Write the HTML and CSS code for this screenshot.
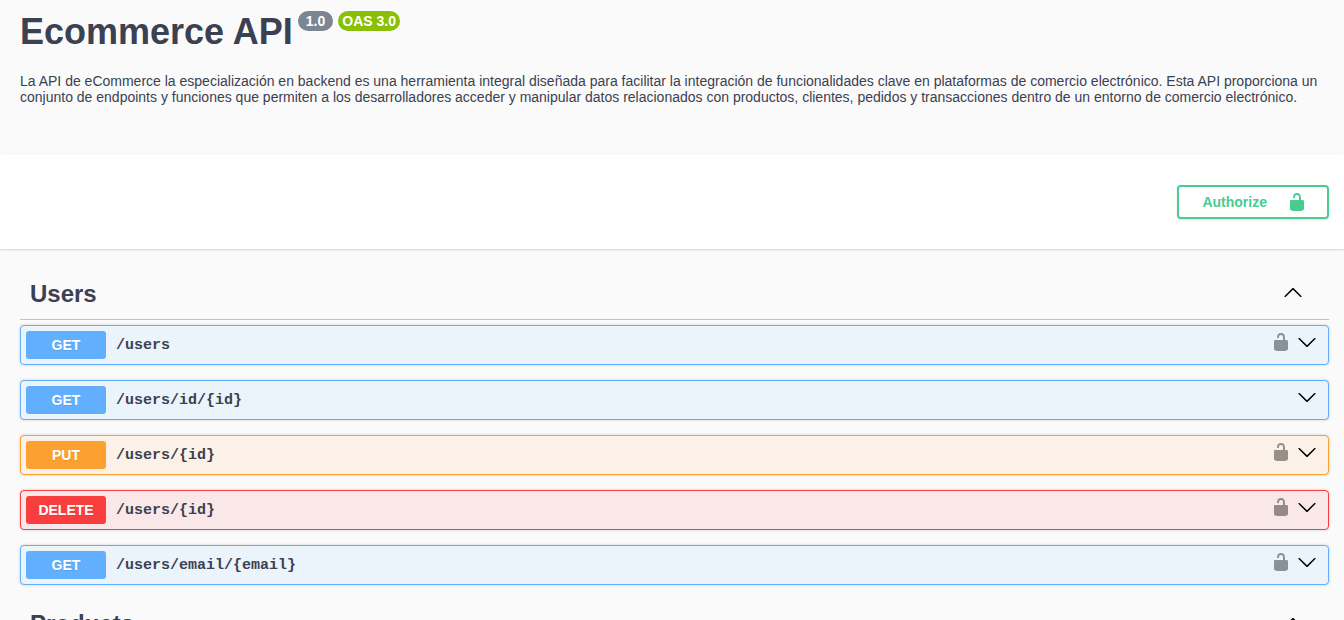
FILE: index.html
```html
<!DOCTYPE html>
<html lang="es">
<head>
  <meta charset="UTF-8">
  <title>Ecommerce API</title>
  <link rel="stylesheet" href="styles.css">
</head>
<body>

  <svg class="sprite" aria-hidden="true">
    <symbol id="unlocked" viewBox="0 0 20 20">
      <path d="M15.8 8H14V5.6C14 2.703 12.665 1 10 1 7.334 1 6 2.703 6 5.6V6h2v-.801C8 3.754 8.797 3 10 3c1.203 0 2 .754 2 2.199V8H4c-.553 0-1 .646-1 1.199V17c0 .549.428 1.139.951 1.307l1.197.387C5.672 18.861 6.55 19 7.1 19h5.8c.549 0 1.428-.139 1.951-.307l1.196-.387c.524-.167.953-.757.953-1.306V9.199C17 8.646 16.352 8 15.8 8z"/>
    </symbol>
    <symbol id="arrow-down" viewBox="0 0 20 20">
      <path d="M17.418 6.109c.272-.268.709-.268.979 0s.271.701 0 .969l-7.908 7.83c-.27.268-.707.268-.979 0l-7.908-7.83c-.27-.268-.27-.701 0-.969.271-.268.709-.268.979 0L10 13.25l7.418-7.141z"/>
    </symbol>
    <symbol id="arrow-up" viewBox="0 0 20 20">
      <path d="M17.418 14.908c.272.268.709.268.979 0s.271-.701 0-.969l-7.908-7.83c-.27-.268-.707-.268-.979 0l-7.908 7.83c-.27.268-.27.701 0 .969.271.268.709.268.979 0L10 7.767l7.418 7.141z"/>
    </symbol>
  </svg>

  <header class="info">
    <div class="info-title">
      <h1>Ecommerce API</h1>
      <span class="badge">1.0</span>
      <span class="badge badge-oas">OAS 3.0</span>
    </div>
    <p class="description">La API de eCommerce la especialización en backend es una herramienta integral diseñada para facilitar la integración de funcionalidades clave en plataformas de comercio electrónico. Esta API proporciona un conjunto de endpoints y funciones que permiten a los desarrolladores acceder y manipular datos relacionados con productos, clientes, pedidos y transacciones dentro de un entorno de comercio electrónico.</p>
  </header>

  <div class="schemes">
    <button class="authorize" type="button">Authorize <svg class="icon"><use href="#unlocked"/></svg></button>
  </div>

  <main class="operations">
    <section class="tag-section">
      <div class="tag">
        <h2>Users</h2>
        <button class="icon-btn" type="button" aria-label="Collapse Users"><svg class="icon"><use href="#arrow-up"/></svg></button>
      </div>
      <div class="opblock get">
        <span class="method">GET</span>
        <a class="path" href="#get-users">/users</a>
        <button class="icon-btn lock" type="button" aria-label="Authorization"><svg class="icon"><use href="#unlocked"/></svg></button>
        <button class="icon-btn" type="button" aria-label="Expand"><svg class="icon"><use href="#arrow-down"/></svg></button>
      </div>
      <div class="opblock get">
        <span class="method">GET</span>
        <a class="path" href="#get-user-id">/users/id/{id}</a>
        <button class="icon-btn" type="button" aria-label="Expand"><svg class="icon"><use href="#arrow-down"/></svg></button>
      </div>
      <div class="opblock put">
        <span class="method">PUT</span>
        <a class="path" href="#put-user">/users/{id}</a>
        <button class="icon-btn lock" type="button" aria-label="Authorization"><svg class="icon"><use href="#unlocked"/></svg></button>
        <button class="icon-btn" type="button" aria-label="Expand"><svg class="icon"><use href="#arrow-down"/></svg></button>
      </div>
      <div class="opblock delete">
        <span class="method">DELETE</span>
        <a class="path" href="#delete-user">/users/{id}</a>
        <button class="icon-btn lock" type="button" aria-label="Authorization"><svg class="icon"><use href="#unlocked"/></svg></button>
        <button class="icon-btn" type="button" aria-label="Expand"><svg class="icon"><use href="#arrow-down"/></svg></button>
      </div>
      <div class="opblock get">
        <span class="method">GET</span>
        <a class="path" href="#get-user-email">/users/email/{email}</a>
        <button class="icon-btn lock" type="button" aria-label="Authorization"><svg class="icon"><use href="#unlocked"/></svg></button>
        <button class="icon-btn" type="button" aria-label="Expand"><svg class="icon"><use href="#arrow-down"/></svg></button>
      </div>
    </section>

    <section class="tag-section">
      <div class="tag">
        <h2>Products</h2>
        <button class="icon-btn" type="button" aria-label="Collapse Products"><svg class="icon"><use href="#arrow-up"/></svg></button>
      </div>
    </section>
  </main>

</body>
</html>
```
FILE: styles.css
```css
* {
  box-sizing: border-box;
}
body {
  margin: 0;
  background: #fafafa;
  color: #3b4151;
  font-family: "Liberation Sans", Arial, sans-serif;
  font-size: 14px;
}
h1, h2, p {
  margin: 0;
}
button {
  font-family: inherit;
  cursor: pointer;
}
.sprite {
  display: none;
}
.icon {
  display: block;
  width: 20px;
  height: 20px;
  fill: currentColor;
}
.info {
  padding: 11px 15px 50px 20px;
}
.info-title {
  display: flex;
  align-items: flex-start;
  gap: 5px;
  margin-bottom: 21px;
}
.info-title h1 {
  font-size: 36px;
  line-height: 41px;
}
.badge {
  padding: 0 8px;
  border-radius: 20px;
  background: #7d8492;
  color: #fff;
  font-size: 14px;
  font-weight: bold;
  line-height: 20px;
}
.badge-oas {
  padding: 0 4px;
  background: #89bf04;
}
.description {
  line-height: 16px;
}
.schemes {
  display: flex;
  justify-content: flex-end;
  padding: 30px 15px;
  background: #fff;
  box-shadow: 0 1px 2px rgba(0, 0, 0, .15);
}
.authorize {
  display: flex;
  align-items: center;
  gap: 20px;
  height: 34px;
  padding: 0 20px 0 23px;
  border: 2px solid #49cc90;
  border-radius: 4px;
  background: transparent;
  box-shadow: 0 1px 2px rgba(0, 0, 0, .1);
  color: #49cc90;
  font-size: 14px;
  font-weight: bold;
}
.operations {
  padding: 21px 15px 0 20px;
}
.tag {
  display: flex;
  align-items: center;
  justify-content: space-between;
  height: 50px;
  margin-bottom: 5px;
  padding: 0 26px 0 10px;
  border-bottom: 1px solid rgba(59, 65, 81, .3);
}
.tag h2 {
  padding-bottom: 2px;
  font-size: 24px;
  line-height: 29px;
}
.icon-btn {
  padding: 0 0 6px;
  border: 0;
  background: none;
  color: #000;
}
.opblock {
  display: flex;
  align-items: center;
  gap: 6px;
  margin-bottom: 15px;
  padding: 5px 11px 5px 5px;
  border: 1px solid;
  border-radius: 4px;
  box-shadow: 0 0 3px rgba(0, 0, 0, .19);
}
.method {
  width: 80px;
  border-radius: 3px;
  color: #fff;
  font-weight: bold;
  line-height: 28px;
  text-align: center;
  text-shadow: 0 1px 0 rgba(0, 0, 0, .1);
}
.path {
  flex: 1;
  padding-left: 4px;
  color: #3b4151;
  font-family: "Liberation Mono", monospace;
  font-size: 15px;
  font-weight: bold;
  text-decoration: none;
}
.lock {
  opacity: .4;
}
.get {
  border-color: #61affe;
  background: #ebf3fb;
}
.get .method {
  background: #61affe;
}
.put {
  border-color: #fca130;
  background: #fbf1e6;
}
.put .method {
  background: #fca130;
}
.delete {
  border-color: #f93e3e;
  background: #fae7e7;
}
.delete .method {
  background: #f93e3e;
}
```
